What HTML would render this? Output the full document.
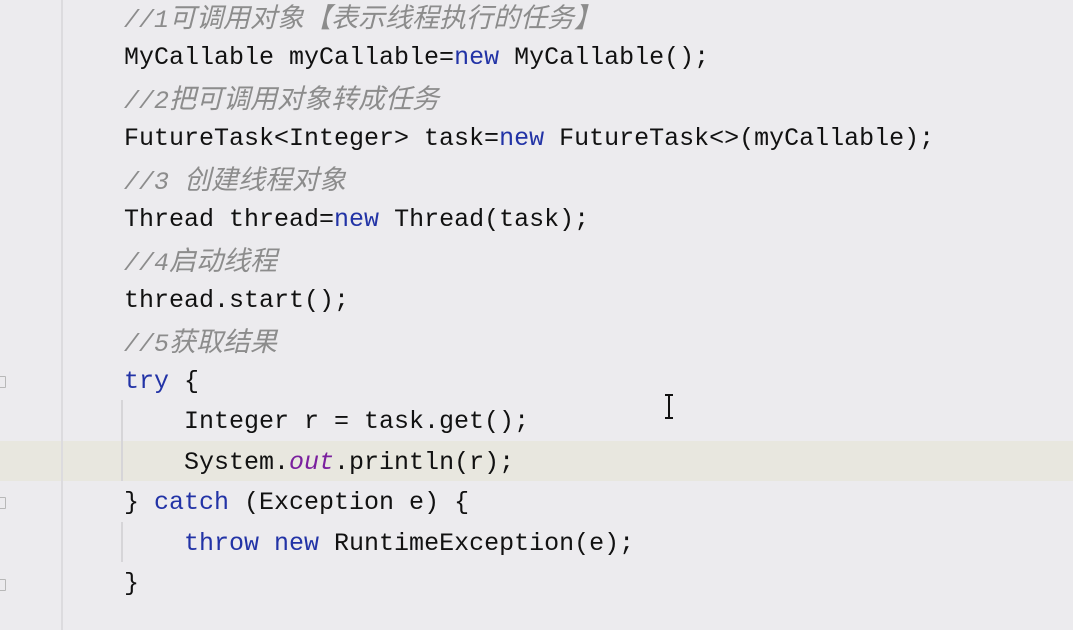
<!DOCTYPE html>
<html><head><meta charset="utf-8"><style>
html,body{margin:0;padding:0}
body{width:1073px;height:630px;background:#ecebee;position:relative;overflow:hidden;font-family:"Liberation Mono","Noto Sans CJK SC",monospace;font-size:25px;color:#111}
.l{position:absolute;left:124px;height:40.5px;line-height:40.5px;white-space:pre}
.c{color:#8c8c8c;font-style:italic;margin-top:4px}
.c span{font-size:27px;line-height:1;font-family:"Noto Sans CJK SC",sans-serif}
.k{color:#2233a6}
.f{color:#7a1f9e;font-style:italic}
.hl{position:absolute;left:0;top:441px;width:1073px;height:40px;background:#e8e7df}
.g{position:absolute;left:61px;top:0;width:2px;height:630px;background:#dcdbde}
.ig{position:absolute;left:121px;width:2px;background:#d6d5d8}
.fold{position:absolute;left:-4px;width:8px;height:10px;border:1.5px solid #b8b8b8;border-radius:1px}
</style></head><body>
<div class="hl"></div>
<div class="g"></div>
<div class="ig" style="top:400px;height:81px"></div>
<div class="ig" style="top:522px;height:40px"></div>
<div class="fold" style="top:376px"></div>
<div class="fold" style="top:497px"></div>
<div class="fold" style="top:579px"></div>
<div class="l c" style="top:-3px">//1<span>可调用对象【表示线程执行的任务】</span></div>
<div class="l" style="top:37.5px">MyCallable myCallable=<span class="k">new</span> MyCallable();</div>
<div class="l c" style="top:78px">//2<span>把可调用对象转成任务</span></div>
<div class="l" style="top:118.5px">FutureTask&lt;Integer&gt; task=<span class="k">new</span> FutureTask&lt;&gt;(myCallable);</div>
<div class="l c" style="top:159px">//3 <span>创建线程对象</span></div>
<div class="l" style="top:199.5px">Thread thread=<span class="k">new</span> Thread(task);</div>
<div class="l c" style="top:240px">//4<span>启动线程</span></div>
<div class="l" style="top:280.5px">thread.start();</div>
<div class="l c" style="top:321px">//5<span>获取结果</span></div>
<div class="l" style="top:361.5px"><span class="k">try</span> {</div>
<div class="l" style="top:402px">    Integer r = task.get();</div>
<div class="l" style="top:442.5px">    System.<span class="f">out</span>.println(r);</div>
<div class="l" style="top:483px">} <span class="k">catch</span> (Exception e) {</div>
<div class="l" style="top:523.5px">    <span class="k">throw new</span> RuntimeException(e);</div>
<div class="l" style="top:564px">}</div>
<svg style="position:absolute;left:662px;top:393px" width="14" height="28" viewBox="0 0 14 28"><path d="M3 2h8M7 2v23M3 25h8" stroke="#111" stroke-width="2" fill="none"/></svg>
</body></html>
